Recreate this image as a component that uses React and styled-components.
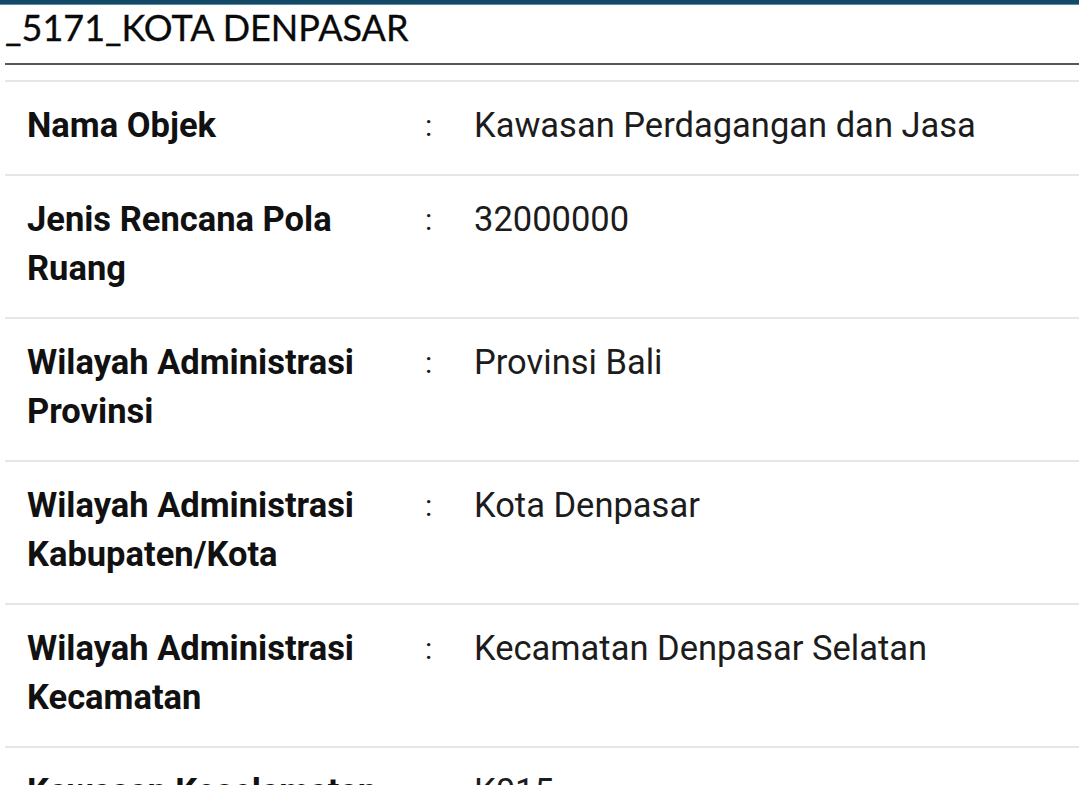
import styled, { createGlobalStyle } from 'styled-components';

const GlobalStyle = createGlobalStyle`
  html, body {
    margin: 0;
    padding: 0;
    background: #ffffff;
  }
  body {
    overflow: hidden;
  }
`;

const rows = [
  { label: 'Nama Objek', value: 'Kawasan Perdagangan dan Jasa' },
  { label: 'Jenis Rencana Pola Ruang', value: '32000000' },
  { label: 'Wilayah Administrasi Provinsi', value: 'Provinsi Bali' },
  { label: 'Wilayah Administrasi Kabupaten/Kota', value: 'Kota Denpasar' },
  { label: 'Wilayah Administrasi Kecamatan', value: 'Kecamatan Denpasar Selatan' },
  { label: 'Kawasan Keselamatan Operasi Penerbangan', value: 'K015' },
];

const App = () => {
  return (
    <Page>
      <GlobalStyle />
      <TopBar />
      <Content>
        <Title>_5171_KOTA DENPASAR</Title>
        <Table>
          {rows.map((row) => (
            <Row key={row.label}>
              <Label>{row.label}</Label>
              <Colon>:</Colon>
              <Value>{row.value}</Value>
            </Row>
          ))}
        </Table>
      </Content>
    </Page>
  );
};

const Page = styled.div`
  width: 1079px;
  height: 785px;
  overflow: hidden;
  background: #ffffff;
`;

const TopBar = styled.div`
  height: 4px;
  background: #134a68;
  border-bottom: 1px solid #5d8ea6;
`;

const Content = styled.div`
  padding-left: 5px;
`;

const Title = styled.h1`
  margin: 0;
  height: 58px;
  font-family: Lato, 'Open Sans', sans-serif;
  font-weight: 400;
  font-size: 36px;
  line-height: 44px;
  color: #0a0a0a;
  white-space: nowrap;
  -webkit-text-stroke: 0.3px #0a0a0a;
  border-bottom: 2px solid #575757;
`;

const Table = styled.div`
  margin-top: 15px;
  border-top: 2px solid #e6e6e6;
`;

const Row = styled.div`
  display: grid;
  grid-template-columns: 398px 49px 1fr;
  padding: 19px 0 24px 22px;
  border-bottom: 2px solid #e6e6e6;
  font-family: Roboto, 'Liberation Sans', sans-serif;
  font-size: 34.5px;
  line-height: 49px;
  color: #1a1a1a;
`;

const Label = styled.div`
  font-weight: 700;
  padding-right: 30px;
  color: #111111;
`;

const Colon = styled.div`
  font-weight: 400;
  font-size: 30px;
`;

const Value = styled.div`
  font-weight: 400;
  color: #1c1c1c;
`;

export default App;
